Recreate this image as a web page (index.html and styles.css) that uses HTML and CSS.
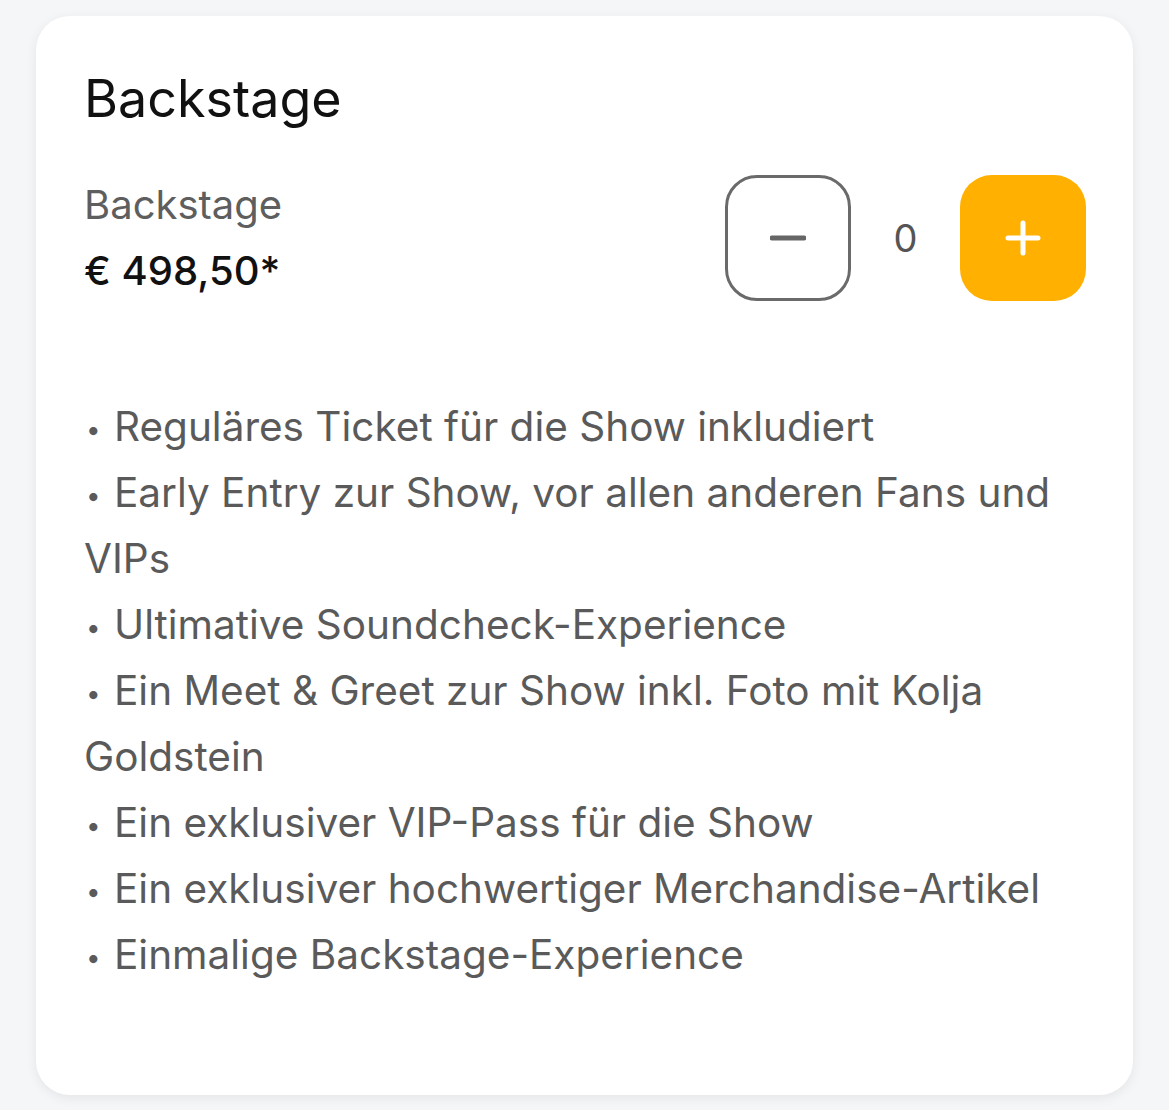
FILE: index.html
```html
<!DOCTYPE html>
<html lang="de">
<head>
<meta charset="utf-8">
<link rel="stylesheet" href="styles.css">
</head>
<body>
<div class="page">
  <section class="card">
    <h1 class="title">Backstage</h1>
    <div class="row">
      <div class="info">
        <div class="name">Backstage</div>
        <div class="price">€ 498,50*</div>
      </div>
      <div class="stepper">
        <button class="btn minus" aria-label="weniger">
          <svg width="36" height="36" viewBox="0 0 36 36"><path d="M2 18h32" stroke="#666" stroke-width="5" stroke-linecap="round"/></svg>
        </button>
        <span class="count">0</span>
        <button class="btn plus" aria-label="mehr">
          <svg width="36" height="36" viewBox="0 0 36 36"><path d="M3 18h30M18 3v30" stroke="#fff" stroke-width="5" stroke-linecap="round"/></svg>
        </button>
      </div>
    </div>
    <div class="desc">
      <p class="item">Reguläres Ticket für die Show inkludiert</p>
      <p class="item">Early Entry zur Show, vor allen anderen Fans und VIPs</p>
      <p class="item">Ultimative Soundcheck-Experience</p>
      <p class="item">Ein Meet &amp; Greet zur Show inkl. Foto mit Kolja Goldstein</p>
      <p class="item">Ein exklusiver VIP-Pass für die Show</p>
      <p class="item">Ein exklusiver hochwertiger Merchandise-Artikel</p>
      <p class="item">Einmalige Backstage-Experience</p>
    </div>
  </section>
</div>
</body>
</html>
```

FILE: styles.css
```css
html, body {
  margin: 0;
  padding: 0;
  background: #f5f6f8;
}
body {
  font-family: Inter, "Noto Sans", sans-serif;
}
.page {
  padding: 16px 36px 15px 36px;
}
.card {
  background: #fff;
  border-radius: 34px;
  box-shadow: 0 3px 12px rgba(0, 0, 0, 0.07);
  padding: 57px 47px 100px 48px;
  box-sizing: border-box;
  height: 1079px;
}
.title {
  margin: 0;
  font-size: 52px;
  font-weight: 400;
  color: #111;
  line-height: 52px;
}
.row {
  display: flex;
  justify-content: space-between;
  align-items: flex-start;
  margin-top: 54px;
}
.name {
  font-size: 40px;
  color: #5e5e5e;
  line-height: 52px;
}
.price {
  font-size: 40px;
  font-weight: 500;
  color: #111;
  line-height: 52px;
  margin-top: 14px;
}
.stepper {
  display: flex;
  align-items: center;
  margin-top: -4px;
}
.btn {
  width: 126px;
  height: 126px;
  border-radius: 32px;
  display: flex;
  align-items: center;
  justify-content: center;
  padding: 0;
  box-sizing: border-box;
}
.minus {
  background: #fff;
  border: 3px solid #6a6a6a;
}
.plus {
  background: #ffb000;
  border: none;
}
.count {
  width: 109px;
  text-align: center;
  font-size: 38px;
  color: #555;
}
.desc {
  margin-top: 93px;
  color: #5a5a5a;
  font-size: 40.5px;
  line-height: 66px;
}
.item {
  margin: 0;
}
.item::before {
  content: "•";
  display: inline-block;
  width: 30px;
  padding-left: 2px;
  box-sizing: border-box;
  font-size: 26px;
  line-height: 26px;
  vertical-align: 2px;
}
```
